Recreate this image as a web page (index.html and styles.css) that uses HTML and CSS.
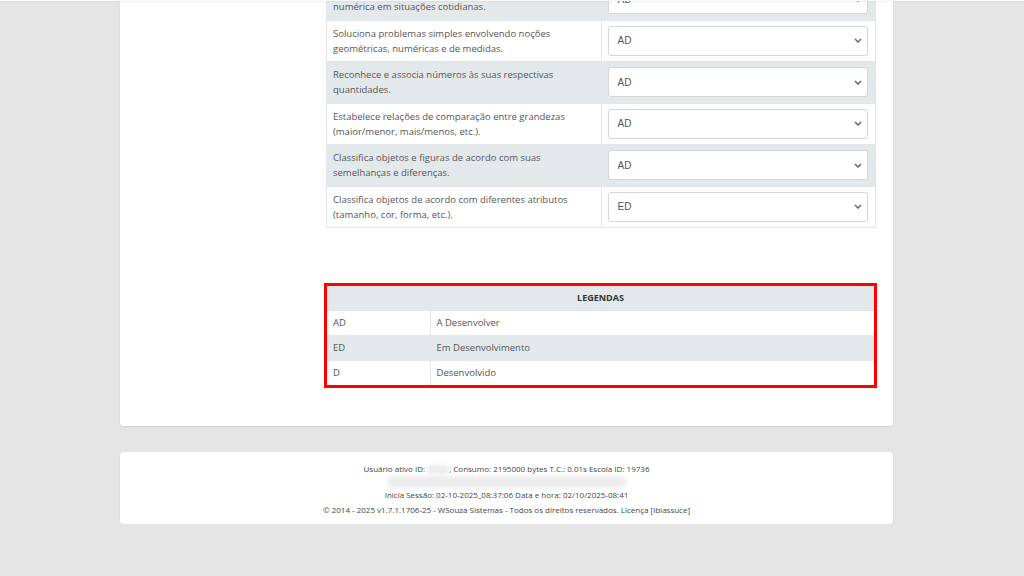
FILE: index.html
```
<!DOCTYPE html>
<html lang="pt-BR">
<head>
  <meta charset="UTF-8">
  <title>Avaliação</title>
  <link rel="stylesheet" href="styles.css">
</head>
<body>

<div class="topline"></div>

<div class="page">
  <div class="card">
    <div class="content">
      <table class="skills">
        <tr class="odd">
          <td>Utiliza a contagem e a representação<br>numérica em situações cotidianas.</td>
          <td><div class="select"><span>AD</span><svg width="8" height="5" viewBox="0 0 8 5"><path d="M1 1l3 3 3-3" fill="none" stroke="#666" stroke-width="1.5"/></svg></div></td>
        </tr>
        <tr>
          <td>Soluciona problemas simples envolvendo noções<br>geométricas, numéricas e de medidas.</td>
          <td><div class="select"><span>AD</span><svg width="8" height="5" viewBox="0 0 8 5"><path d="M1 1l3 3 3-3" fill="none" stroke="#666" stroke-width="1.5"/></svg></div></td>
        </tr>
        <tr class="odd">
          <td>Reconhece e associa números às suas respectivas<br>quantidades.</td>
          <td><div class="select"><span>AD</span><svg width="8" height="5" viewBox="0 0 8 5"><path d="M1 1l3 3 3-3" fill="none" stroke="#666" stroke-width="1.5"/></svg></div></td>
        </tr>
        <tr>
          <td>Estabelece relações de comparação entre grandezas<br>(maior/menor, mais/menos, etc.).</td>
          <td><div class="select"><span>AD</span><svg width="8" height="5" viewBox="0 0 8 5"><path d="M1 1l3 3 3-3" fill="none" stroke="#666" stroke-width="1.5"/></svg></div></td>
        </tr>
        <tr class="odd">
          <td>Classifica objetos e figuras de acordo com suas<br>semelhanças e diferenças.</td>
          <td><div class="select"><span>AD</span><svg width="8" height="5" viewBox="0 0 8 5"><path d="M1 1l3 3 3-3" fill="none" stroke="#666" stroke-width="1.5"/></svg></div></td>
        </tr>
        <tr>
          <td>Classifica objetos de acordo com diferentes atributos<br>(tamanho, cor, forma, etc.).</td>
          <td><div class="select"><span>ED</span><svg width="8" height="5" viewBox="0 0 8 5"><path d="M1 1l3 3 3-3" fill="none" stroke="#666" stroke-width="1.5"/></svg></div></td>
        </tr>
      </table>

      <div class="legend-box">
        <table class="legend">
          <tr class="head"><th colspan="2">LEGENDAS</th></tr>
          <tr><td class="code">AD</td><td>A Desenvolver</td></tr>
          <tr class="odd"><td class="code">ED</td><td>Em Desenvolvimento</td></tr>
          <tr><td class="code">D</td><td>Desenvolvido</td></tr>
        </table>
      </div>
    </div>
  </div>

  <div class="footer">
    <p>Usuário ativo ID: <span class="blur-id"></span>, Consumo: 2195000 bytes T.C.: 0.01s Escola ID: 19736</p>
    <div class="blur-line"></div>
    <p>Inicia Sessão: 02-10-2025_08:37:06 Data e hora: 02/10/2025-08:41</p>
    <p class="copy">© 2014 - 2025 v1.7.1.1706-25 - WSouza Sistemas - Todos os direitos reservados. Licença [ibiassuce]</p>
  </div>
</div>

</body>
</html>
```

FILE: styles.css
```
* {
  box-sizing: border-box;
}

body {
  margin: 0;
  background-color: #e5e5e5;
  font-family: "Open Sans", Arial, sans-serif;
  color: #555;
  overflow: hidden;
}

.topline {
  position: fixed;
  top: 0;
  left: 0;
  right: 0;
  height: 1px;
  background-color: #fafafa;
  box-shadow: 0 1px 1px rgba(0,0,0,0.05);
}

.page {
  width: 773px;
  margin-left: 120px;
  margin-top: -22px;
}

.card {
  background-color: #fff;
  border-radius: 0 0 4px 4px;
  box-shadow: 0 1px 2px rgba(0,0,0,0.08);
  padding-bottom: 38px;
}

.content {
  margin-left: 206px;
  margin-right: 17px;
}

table {
  border-collapse: collapse;
  width: 100%;
}

.skills td {
  width: 50%;
  height: 41.5px;
  border: 1px solid #e3e6e8;
  padding: 0 7px 0 6px;
  font-size: 9.5px;
  line-height: 15px;
  vertical-align: middle;
}

.skills tr.odd td,
.legend tr.odd td,
.legend tr.head th {
  background-color: #e3e9eb;
}

.select {
  height: 30px;
  border: 1px solid #d6d6d6;
  border-radius: 3px;
  background-color: #fff;
  display: flex;
  align-items: center;
  justify-content: space-between;
  padding: 0 5px 0 9px;
  font-size: 10px;
  font-family: "Liberation Sans", Arial, sans-serif;
  color: #555;
}

.legend-box {
  margin: 55px -1px 0 -2px;
  border: 3px solid #ff0000;
}

.legend th {
  height: 24px;
  font-size: 9px;
  font-weight: bold;
  color: #333;
  text-align: center;
}

.legend td {
  height: 25px;
  border-top: 1px solid #e3e6e8;
  padding: 0 6px;
  font-size: 9.5px;
}

.legend td.code {
  width: 103px;
  border-right: 1px solid #e3e6e8;
}

.footer {
  margin-top: 26px;
  background-color: #fff;
  border-radius: 4px;
  box-shadow: 0 1px 2px rgba(0,0,0,0.08);
  height: 72px;
  padding-top: 11px;
  text-align: center;
  font-size: 8px;
  color: #444;
}

.footer p {
  margin: 0;
  line-height: 12px;
}

.footer .copy {
  margin-top: 3px;
}

.blur-id {
  display: inline-block;
  width: 22px;
  height: 9px;
  vertical-align: middle;
  background-color: #eee;
  border-radius: 4px;
  filter: blur(1.5px);
}

.blur-line {
  width: 240px;
  height: 12px;
  margin: 1px auto 1px;
  background-color: #ececec;
  border-radius: 6px;
  filter: blur(2px);
}
```
